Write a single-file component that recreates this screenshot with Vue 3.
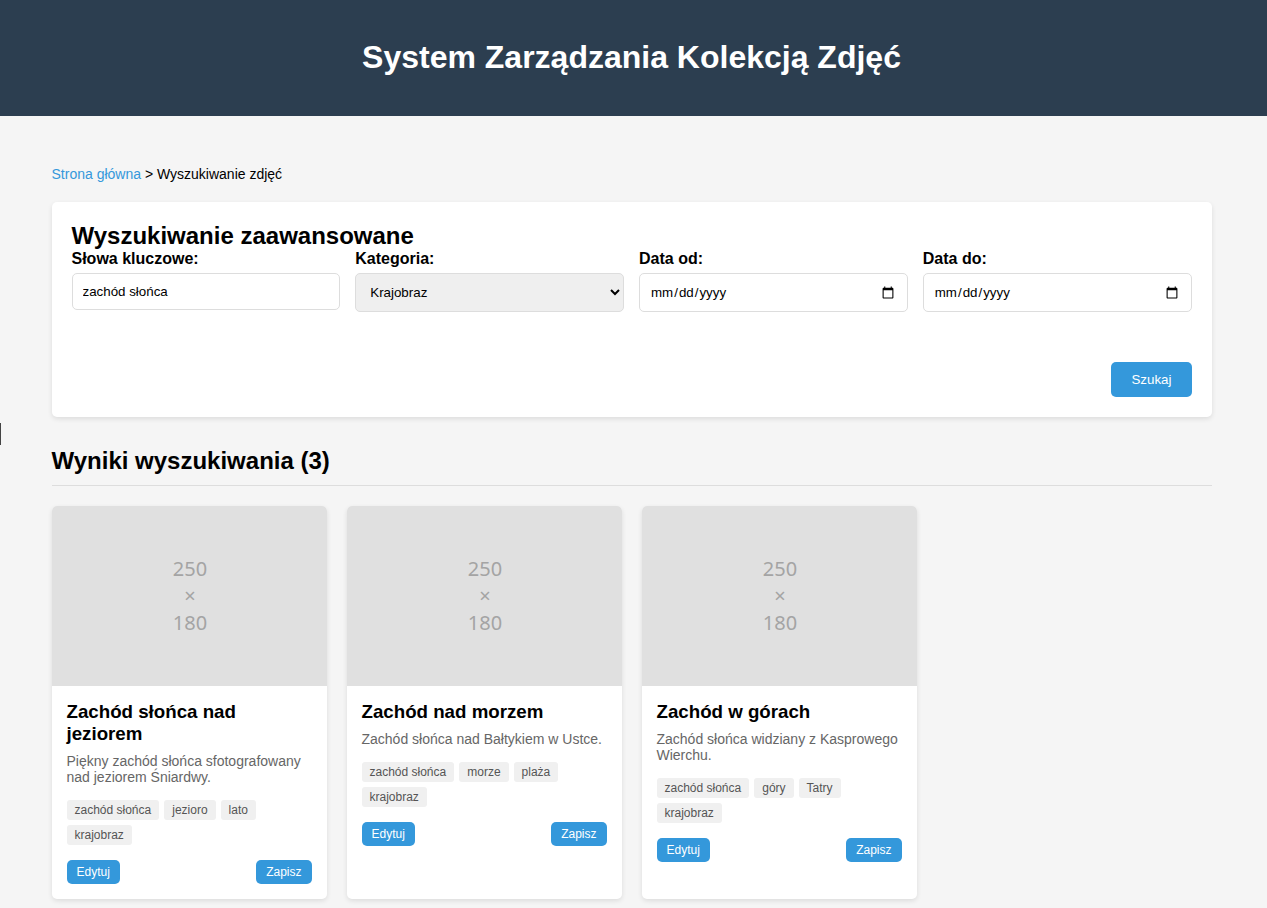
<script setup>
import { ref } from 'vue'

const keywords = ref('zachód słońca')
const category = ref('Krajobraz')
const dateFrom = ref('')
const dateTo = ref('')

const categories = ['Krajobraz', 'Portret', 'Architektura', 'Przyroda']

const photos = [
  {
    title: 'Zachód słońca nad jeziorem',
    description: 'Piękny zachód słońca sfotografowany nad jeziorem Śniardwy.',
    tags: ['zachód słońca', 'jezioro', 'lato', 'krajobraz'],
  },
  {
    title: 'Zachód nad morzem',
    description: 'Zachód słońca nad Bałtykiem w Ustce.',
    tags: ['zachód słońca', 'morze', 'plaża', 'krajobraz'],
  },
  {
    title: 'Zachód w górach',
    description: 'Zachód słońca widziany z Kasprowego Wierchu.',
    tags: ['zachód słońca', 'góry', 'Tatry', 'krajobraz'],
  },
]
</script>

<template>
  <div class="page">
    <header class="site-header">
      <h1>System Zarządzania Kolekcją Zdjęć</h1>
    </header>

    <span class="edge-handle" aria-hidden="true"></span>

    <main class="container">
      <nav class="breadcrumb">
        <a href="#">Strona główna</a> &gt; Wyszukiwanie zdjęć
      </nav>

      <section class="search-panel">
        <h2>Wyszukiwanie zaawansowane</h2>
        <form class="search-form" @submit.prevent>
          <div class="field">
            <label for="keywords">Słowa kluczowe:</label>
            <input id="keywords" v-model="keywords" type="text" />
          </div>
          <div class="field">
            <label for="category">Kategoria:</label>
            <select id="category" v-model="category">
              <option v-for="item in categories" :key="item">{{ item }}</option>
            </select>
          </div>
          <div class="field">
            <label for="date-from">Data od:</label>
            <input id="date-from" v-model="dateFrom" type="date" />
          </div>
          <div class="field">
            <label for="date-to">Data do:</label>
            <input id="date-to" v-model="dateTo" type="date" />
          </div>
          <div class="form-actions">
            <button class="btn" type="submit">Szukaj</button>
          </div>
        </form>
      </section>

      <section>
        <h2 class="results-title">Wyniki wyszukiwania ({{ photos.length }})</h2>
        <div class="gallery">
          <article v-for="photo in photos" :key="photo.title" class="card">
            <div class="thumb">
              <span>250</span>
              <span>×</span>
              <span>180</span>
            </div>
            <div class="card-body">
              <h3>{{ photo.title }}</h3>
              <p>{{ photo.description }}</p>
              <div class="tags">
                <span v-for="tag in photo.tags" :key="tag" class="tag">{{ tag }}</span>
              </div>
              <div class="card-actions">
                <button class="btn btn-small" type="button">Edytuj</button>
                <button class="btn btn-small" type="button">Zapisz</button>
              </div>
            </div>
          </article>
        </div>
      </section>
    </main>
  </div>
</template>

<style>
body {
  margin: 0;
  background: #f5f5f5;
}
</style>

<style scoped>
* {
  box-sizing: border-box;
  margin: 0;
  padding: 0;
}

.page {
  position: relative;
  font-family: Arial, "Liberation Sans", sans-serif;
  color: #000;
}

.site-header {
  padding: 40px 24px 42px 20px;
  background: #2c3e50;
  color: #fff;
  text-align: center;
}

h1 {
  font-size: 32px;
  line-height: 34px;
}

h2 {
  font-size: 24px;
}

.edge-handle {
  position: absolute;
  top: 423px;
  left: 0;
  width: 1px;
  height: 22px;
  background: #444;
}

.container {
  max-width: 1204px;
  margin: 0 auto;
  padding: 50px 24px 20px 20px;
}

.breadcrumb {
  margin-bottom: 20px;
  font-size: 14px;
}

.breadcrumb a {
  color: #3498db;
  text-decoration: none;
}

.search-panel {
  margin-bottom: 30px;
  padding: 20px;
  border-radius: 5px;
  background: #fff;
  box-shadow: 0 2px 5px rgba(0, 0, 0, 0.1);
}

.search-form {
  display: grid;
  grid-template-columns: repeat(auto-fill, minmax(250px, 1fr));
  gap: 15px;
}

.field {
  margin-bottom: 15px;
}

.field label {
  display: block;
  margin-bottom: 5px;
  font-weight: bold;
}

.field input,
.field select {
  width: 100%;
  padding: 10px;
  border: 1px solid #ddd;
  border-radius: 5px;
  font-family: inherit;
}

.form-actions {
  grid-column: 1 / -1;
  margin-top: 20px;
  text-align: right;
}

.btn {
  padding: 10px 20px;
  border: none;
  border-radius: 5px;
  background: #3498db;
  color: #fff;
  cursor: pointer;
}

.btn-small {
  padding: 5px 10px;
  font-size: 12px;
}

.results-title {
  margin-bottom: 20px;
  padding-bottom: 10px;
  border-bottom: 1px solid #ddd;
}

.gallery {
  display: grid;
  grid-template-columns: repeat(auto-fill, minmax(250px, 1fr));
  gap: 20px;
}

.card {
  overflow: hidden;
  border-radius: 5px;
  background: #fff;
  box-shadow: 0 2px 5px rgba(0, 0, 0, 0.1);
}

.thumb {
  display: flex;
  flex-direction: column;
  align-items: center;
  justify-content: center;
  height: 180px;
  padding: 0 0 2px 2px;
  background: #e0e0e0;
  color: #a4a4a4;
  font-family: "Noto Sans", sans-serif;
  font-size: 20px;
  line-height: 27px;
}

.card-body {
  padding: 15px;
}

.card-body h3 {
  margin-bottom: 8px;
}

.card-body p {
  margin-bottom: 15px;
  color: #666;
  font-size: 14px;
}

.tags {
  display: flex;
  flex-wrap: wrap;
  gap: 5px;
  margin-bottom: 15px;
}

.tag {
  padding: 3px 8px;
  border-radius: 3px;
  background: #f0f0f0;
  color: #555;
  font-size: 12px;
}

.card-actions {
  display: flex;
  justify-content: space-between;
}
</style>
